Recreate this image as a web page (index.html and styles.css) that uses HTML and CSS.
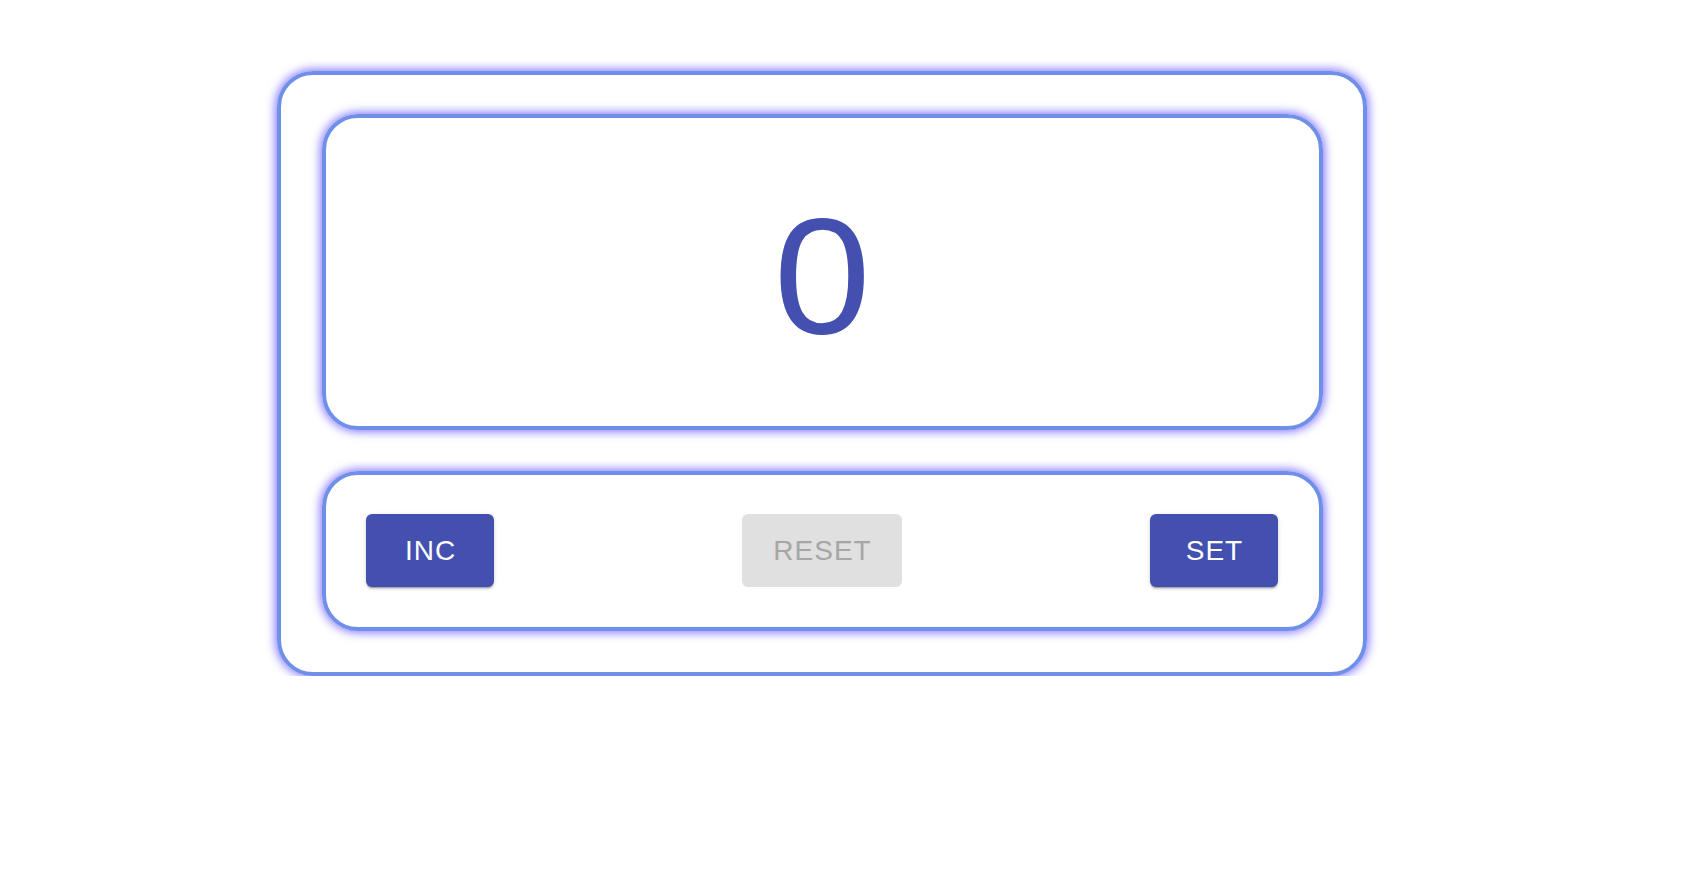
FILE: index.html
```html
<!DOCTYPE html>
<html>
<head>
<meta charset="utf-8">
<link rel="stylesheet" href="styles.css">
</head>
<body>
<div class="page">
  <div class="counter">
    <div class="display panel">
      <span class="value">0</span>
    </div>
    <div class="controls panel">
      <button class="btn btn-primary">INC</button>
      <button class="btn btn-disabled" disabled>RESET</button>
      <button class="btn btn-primary">SET</button>
    </div>
  </div>
</div>
</body>
</html>
```
FILE: styles.css
```css
html, body {
  margin: 0;
  padding: 0;
  background: #ffffff;
  font-family: "Liberation Sans", Arial, sans-serif;
}
.page {
  padding: 71px 0 0 277px;
}
.counter {
  width: 1090px;
  box-sizing: border-box;
  border: 4px solid #6f8fe9;
  border-radius: 36px;
  box-shadow: 0 0 10px 2px #8a7dff;
  padding: 39px 40px 41px 41px;
  display: flex;
  flex-direction: column;
  gap: 41px;
}
.panel {
  border: 4px solid #6f8fe9;
  border-radius: 36px;
  box-shadow: 0 0 10px 2px #8a7dff;
}
.display {
  height: 316px;
  box-sizing: border-box;
  display: flex;
  align-items: center;
  justify-content: center;
}
.value {
  font-size: 166px;
  line-height: 1;
  color: #4350b0;
  padding-top: 8px;
  display: inline-block;
  transform: scaleX(1.05);
}
.controls {
  padding: 39px 41px 40px 40px;
  display: flex;
  justify-content: space-between;
  align-items: center;
}
.btn {
  height: 73px;
  border: none;
  border-radius: 6px;
  font-family: "Liberation Sans", Arial, sans-serif;
  font-size: 28px;
  letter-spacing: 1px;
  text-indent: 1px;
  padding: 0;
}
.btn-primary {
  width: 128px;
  background: #4350b0;
  color: #ffffff;
  box-shadow: 0 3px 1px -2px rgba(0,0,0,0.2), 0 2px 2px 0 rgba(0,0,0,0.14), 0 1px 5px 0 rgba(0,0,0,0.12);
}
.btn-disabled {
  width: 160px;
  background: #e0e0e0;
  color: #a6a6a6;
}
```
